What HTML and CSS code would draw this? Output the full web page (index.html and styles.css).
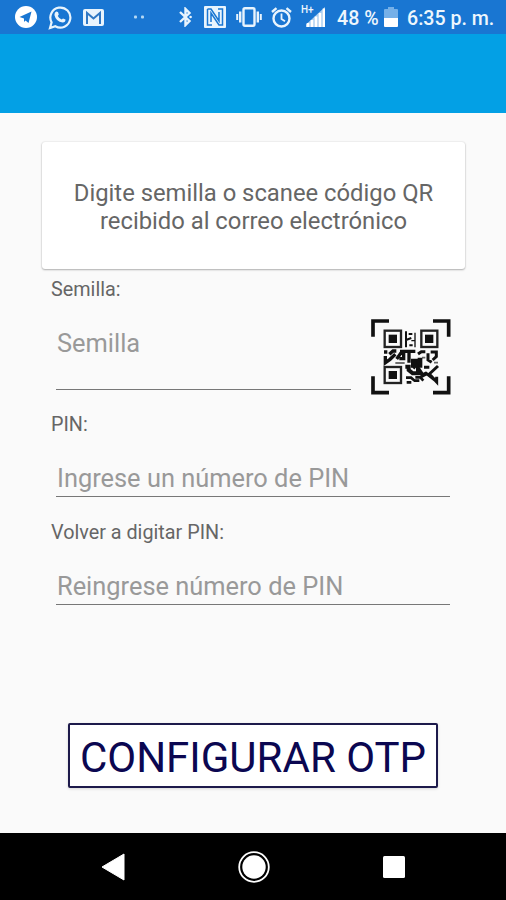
FILE: index.html
```html
<!DOCTYPE html>
<html lang="es">

<head>
  <meta charset="UTF-8" />
  <meta name="viewport" content="width=device-width, initial-scale=1" />
  <title>Configurar OTP</title>
  <link rel="stylesheet" href="styles.css">
</head>

<body>

  <div class="status-bar">
    <div class="status-left">
      <svg class="ic-telegram" width="22" height="22" viewBox="0 0 22 22">
        <circle cx="11" cy="11" r="11" fill="#fff" />
        <path d="M4.5 11 L16.5 5.5 L13.5 17 L10.5 14.5 L9 16 L9 12.5 Z" fill="#1976d2" />
      </svg>
      <svg class="ic-whatsapp" width="24" height="25" viewBox="0 0 24 25">
        <path d="M2 23 L3.6 17.4 A10 10 0 1 1 7.3 21.2 Z" fill="none" stroke="#e8f4fd" stroke-width="2.2" />
        <path d="M8.2 6.5 L10 7 L10.8 9.6 L9.8 11 Q11 13.6 13.7 14.6 L15 13.4 L17.5 14.6 Q17.6 17.6 14.6 17.6 Q8 16.6 6.4 10 Q6.4 7.3 8.2 6.5 Z" fill="#e8f4fd" />
      </svg>
      <svg class="ic-gmail" width="21" height="17" viewBox="0 0 21 17">
        <rect width="21" height="17" rx="2" fill="#e8f4fd" />
        <path d="M4 15 V4 L10.5 9.5 L17 4 V15" fill="none" stroke="#2f78c4" stroke-width="2" />
      </svg>
      <svg class="ic-dots" width="11" height="4" viewBox="0 0 11 4">
        <rect x="0" y="0.5" width="3" height="3" rx="1" fill="#b4d8f4" />
        <rect x="7" y="0.5" width="3" height="3" rx="1" fill="#b4d8f4" />
      </svg>
    </div>
    <div class="status-right">
      <svg width="14" height="20" viewBox="0 0 14 20">
        <path d="M2 5 L11.5 14 L7.5 18 V2 L11.5 6 L2 15" fill="none" stroke="#e8f4fd" stroke-width="2.4" />
        <circle cx="12.6" cy="10" r="1.3" fill="#e8f4fd" />
      </svg>
      <svg class="ic-nfc" width="22" height="22" viewBox="0 0 22 22">
        <rect width="22" height="22" rx="1" fill="#e8f4fd" />
        <path d="M8 19 H3.500 V3 M3.500 3 H7 L15 15 V6 M14 3 H18.500 V19 H15 L7 7 V16" fill="none" stroke="#1976d2" stroke-width="1.5" />
      </svg>
      <svg class="ic-vibrate" width="26" height="20" viewBox="0 0 26 20">
        <rect x="7.5" y="1.2" width="11" height="17.6" rx="1.5" fill="none" stroke="#e8f4fd" stroke-width="2.4" />
        <path d="M4.2 4.5 V15.5 M21.8 4.5 V15.5" stroke="#e8f4fd" stroke-width="2.4" />
        <path d="M1.2 7 V13 M24.8 7 V13" stroke="#e8f4fd" stroke-width="2" />
      </svg>
      <svg class="ic-alarm" width="21" height="21" viewBox="0 0 21 21">
        <circle cx="10.5" cy="11.5" r="8" fill="none" stroke="#e8f4fd" stroke-width="2.4" />
        <path d="M10.5 6.5 V12 L14 14.3" fill="none" stroke="#e8f4fd" stroke-width="1.8" />
        <path d="M1 5 L5.5 1.2 M20 5 L15.5 1.2" stroke="#e8f4fd" stroke-width="2.4" />
      </svg>
      <div class="signal">
        <span class="signal-type">H+</span>
        <svg width="19" height="20" viewBox="0 0 19 20">
          <path d="M0 20 V17.5 L19 0 V20 Z" fill="#a9cdf0" />
          <path d="M2 20 V16 M6 20 V13 M10 20 V9.5 M14 20 V6 M18 20 V1.5" stroke="#fff" stroke-width="2.6" />
        </svg>
      </div>
      <span class="battery-text">48 %</span>
      <svg class="ic-battery" width="14" height="20" viewBox="0 0 14 20">
        <path d="M0 3 Q0 2 1 2 H4 V0 H10 V2 H13 Q14 2 14 3 V11 H0 Z" fill="#75b0e8" />
        <path d="M0 11 H14 V19 Q14 20 13 20 H1 Q0 20 0 19 Z" fill="#fff" />
      </svg>
      <span class="clock">6:35 p. m.</span>
    </div>
  </div>

  <div class="app-bar"></div>

  <main class="content">
    <div class="card">
      Digite semilla o scanee código QR<br />recibido al correo electrónico
    </div>

    <div class="form">
      <label class="label" for="semilla">Semilla:</label>
      <div class="seed-row">
        <input id="semilla" class="field field-seed" type="text" placeholder="Semilla" />
        <button class="qr-button" type="button" aria-label="Escanear código QR">
          <svg width="80" height="76" viewBox="33 27 240 228">
            <g fill="none" stroke="#111" stroke-width="11">
              <path d="M39 80 V33 H87" />
              <path d="M219 33 H266 V80" />
              <path d="M39 199 V248 H87" />
              <path d="M219 248 H266 V199" />
            </g>
            <g fill="none" stroke="#222" stroke-width="7">
              <rect x="74" y="62" width="49" height="49" />
              <rect x="184" y="62" width="48" height="49" />
              <rect x="74" y="171" width="49" height="48" />
            </g>
            <g fill="#111">
              <rect x="86" y="74" width="25" height="25" />
              <rect x="195" y="74" width="25" height="25" />
              <rect x="86" y="183" width="25" height="24" />
            </g>
            <g fill="none" stroke="#111" stroke-width="9">
              <path d="M138 64 V112 M138 90 L154 84 M146 72 H157 M148 106 H158" stroke-width="6" />
              <path d="M165 68 V112 M154 92 H165" stroke-width="4" />
              <path d="M72 126 H82 M88 133 L99 123 H109 M76 138 V158 L90 148 L106 133" stroke-width="10" />
              <path d="M110 147 L122 130 H131 V146 H118 M120 124 H166 M147 126 V158" stroke-width="10" />
              <path d="M106 159 H134" stroke="#555" stroke-width="5" />
              <path d="M174 132 L184 125 H196 M204 130 V150 L215 157 M212 126 H229 V140 L218 150" />
              <path d="M186 143 H196 M222 158 H234" stroke="#666" stroke-width="5" />
              <path d="M180 143 V166 H160 V153 H174 L158 174" stroke-width="14" />
              <path d="M136 170 H146 V180 L158 190 H174 V175 L188 196 L200 190" stroke-width="12" />
              <path d="M192 172 H208 M234 168 L208 192 L230 216 V200 M196 188 L214 202 L232 216" />
              <path d="M138 203 H153 L164 212 H178 M166 202 H181 L190 212 M140 217 H154" stroke-width="8" />
            </g>
          </svg>
        </button>
      </div>

      <label class="label label-pin" for="pin">PIN:</label>
      <input id="pin" class="field" type="text" placeholder="Ingrese un número de PIN" />

      <label class="label label-repeat" for="pin2">Volver a digitar PIN:</label>
      <input id="pin2" class="field" type="text" placeholder="Reingrese número de PIN" />
    </div>

    <button class="submit" type="button">CONFIGURAR OTP</button>
  </main>

  <nav class="nav-bar">
    <svg width="24" height="28" viewBox="0 0 24 28">
      <path d="M1 14 L23 1 V27 Z" fill="#fff" stroke="#fff" stroke-linejoin="round" />
    </svg>
    <svg width="32" height="32" viewBox="0 0 32 32">
      <circle cx="16" cy="16" r="14.8" fill="none" stroke="#fff" stroke-width="1.8" />
      <circle cx="16" cy="16" r="11.7" fill="#fff" />
    </svg>
    <svg width="22" height="22" viewBox="0 0 22 22">
      <rect width="22" height="22" rx="1.5" fill="#fff" />
    </svg>
  </nav>

</body>

</html>
```
FILE: styles.css
```css
* {
  box-sizing: border-box;
}

body {
  margin: 0;
  height: 900px;
  display: flex;
  flex-direction: column;
  overflow: hidden;
  font-family: Roboto, "Liberation Sans", sans-serif;
  background: #fafafa;
  color: #666;
}

svg {
  display: block;
  flex: none;
}

/* barra de estado */
.status-bar {
  display: flex;
  justify-content: space-between;
  height: 34px;
  padding: 0 11px 0 15px;
  background: #1976d2;
  color: #eef6fd;
}

.status-left,
.status-right {
  display: flex;
  align-items: center;
}

.ic-whatsapp {
  margin-left: 11px;
}

.ic-gmail {
  margin-left: 11px;
}

.ic-dots {
  margin-left: 30px;
}

.ic-nfc {
  margin-left: 12px;
}

.ic-vibrate {
  margin-left: 10px;
}

.ic-alarm {
  margin-left: 9px;
}

.signal {
  position: relative;
  display: flex;
  justify-content: flex-end;
  width: 24px;
  margin-left: 9px;
}

.signal-type {
  position: absolute;
  top: -2px;
  left: 0;
  font-size: 10px;
  font-weight: 500;
  line-height: 10px;
}

.battery-text,
.clock {
  padding-top: 3px;
  font-size: 19.6px;
  font-weight: 500;
  line-height: 34px;
  white-space: nowrap;
}

.battery-text {
  width: 41px;
  margin-left: 12px;
}

.ic-battery {
  margin-left: 6px;
}

.clock {
  width: 88px;
  margin-left: 9px;
}

.app-bar {
  height: 79px;
  background: #03a0e5;
}

.content {
  flex: 1;
  padding: 29px 41px 0 42px;
}

.card {
  height: 127px;
  padding-top: 37px;
  background: #fff;
  border-radius: 3px;
  box-shadow: 0 1px 2px rgba(0, 0, 0, 0.28), 0 0 2px rgba(0, 0, 0, 0.14);
  font-size: 23.8px;
  line-height: 28px;
  text-align: center;
}

.form {
  padding: 9px 14px 0 9px;
}

.label {
  display: block;
  font-size: 19.8px;
  line-height: 24px;
}

.label-pin {
  margin-top: 18px;
}

.label-repeat {
  margin-top: 24px;
}

.field {
  display: block;
  width: 394px;
  height: 43px;
  margin: 17px 0 0 5px;
  padding: 5px 0 0 1px;
  border: none;
  border-bottom: 1px solid #777;
  border-radius: 0;
  background: none;
  font-family: inherit;
  font-size: 25.4px;
  color: #333;
  outline: none;
}

.field::placeholder {
  color: #999;
  opacity: 1;
}

.seed-row {
  display: flex;
  justify-content: space-between;
  margin-top: 16px;
}

.field-seed {
  width: 295px;
  height: 72px;
  margin-top: 0;
  padding: 0 0 21px 1px;
}

.qr-button {
  height: 76px;
  margin-top: 1px;
  padding: 0;
  border: none;
  background: none;
}

.submit {
  display: block;
  width: 370px;
  height: 65px;
  margin: 118px 0 0 26px;
  padding: 5px 0 0;
  border: 2px solid #1d1a4b;
  border-radius: 2px;
  background: #fff;
  box-shadow: 0 1px 3px rgba(0, 0, 0, 0.15);
  font-family: inherit;
  font-size: 42px;
  line-height: 1;
  color: #0b0751;
  white-space: nowrap;
}

/* botones de navegación */
.nav-bar {
  display: flex;
  justify-content: space-between;
  align-items: center;
  height: 67px;
  padding: 0 101px;
  background: #000;
}
```
